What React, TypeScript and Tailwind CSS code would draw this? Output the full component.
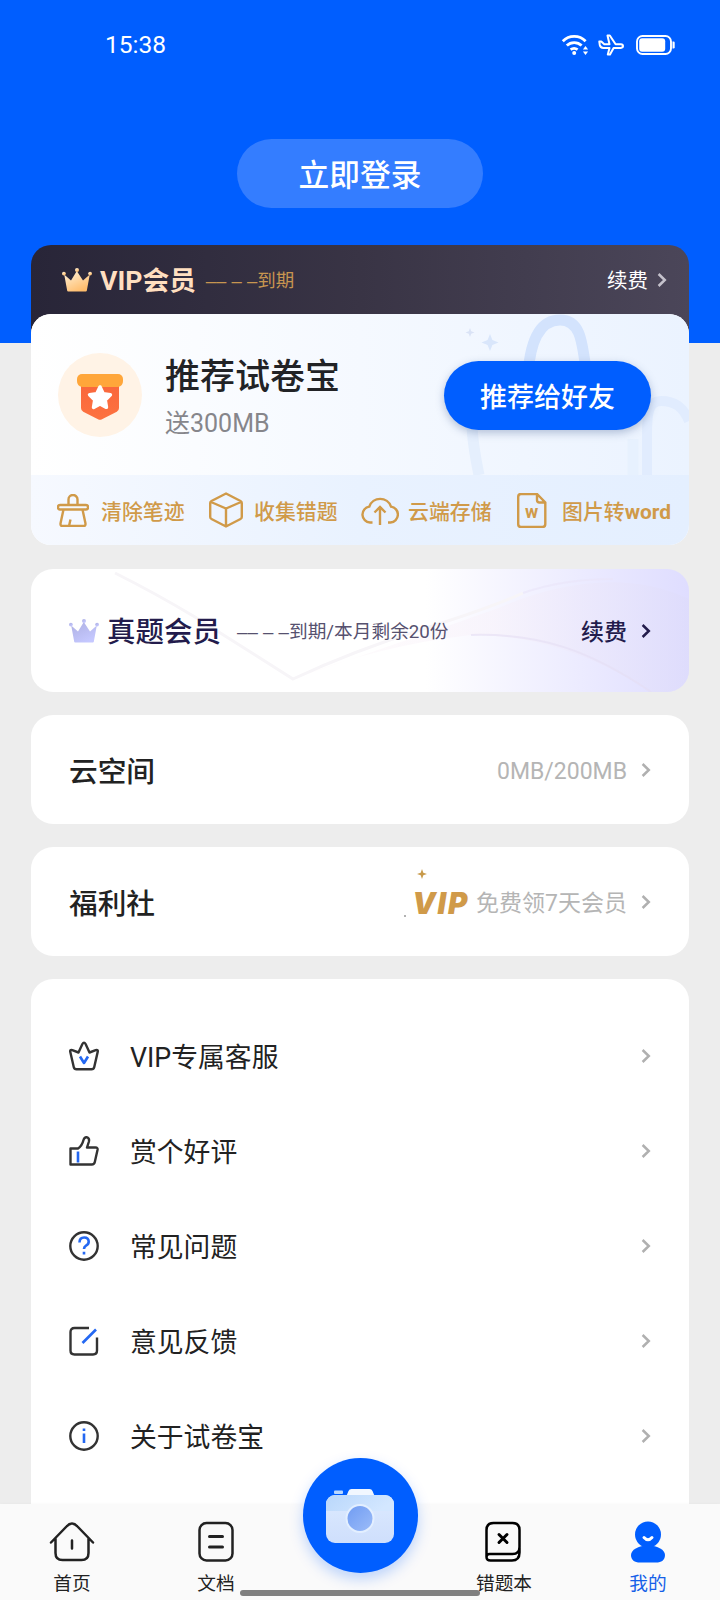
import type { ReactNode } from "react";
import { clsx } from "clsx";

function Chevron({ className }: { className?: string }) {
  return (
    <svg viewBox="0 0 10 16" className={clsx("w-[10px] h-4 shrink-0", className)} fill="none" stroke="currentColor" strokeWidth="2.5">
      <path d="M1.6 2 7.8 8l-6.2 6" />
    </svg>
  );
}

function Crown({ id, from, to }: { id: string; from: string; to: string }) {
  return (
    <svg viewBox="0 0 30 24" className="w-[30px] h-6 shrink-0">
      <defs>
        <linearGradient id={id} x1="0" y1="0" x2="0.6" y2="1">
          <stop offset="0" stopColor={from} />
          <stop offset="1" stopColor={to} />
        </linearGradient>
      </defs>
      <g fill={`url(#${id})`}>
        <path d="M2.2 6.5 9 12.5 14.8 3 21 12.5l6.8-6-3 16.2q-.1.8-1 .8H6.2q-.9 0-1-.8z" />
        <circle cx="1.9" cy="5.6" r="1.9" />
        <circle cx="15" cy="2" r="2" />
        <circle cx="28.1" cy="5.6" r="1.9" />
      </g>
    </svg>
  );
}

// placeholder shown while there is no expiry date
function EmptyDate() {
  return <span className="font-['Liberation_Sans',sans-serif]">–– – –</span>;
}

function StatusBar() {
  return (
    <div className="h-[90px] pl-[105px] pr-[45px] flex items-center justify-between text-white">
      <span className="text-[24.5px] leading-none">15:38</span>
      <div className="flex items-center">
        <svg viewBox="0 0 28 22" className="w-7 h-[22px]" fill="none" stroke="currentColor" strokeWidth="2.8">
          <path d="M1.8 7.2a16 16 0 0 1 22.800 0M5.800 11.600a10.500 10.500 0 0 1 14.800 0M9.600 15.600a6 6 0 0 1 7 0" />
          <circle cx="13.2" cy="19" r="2" fill="currentColor" stroke="none" />
          <path d="m24.500 12 2.600 3.600h-5.200zM24.500 21l2.600-3.600h-5.200z" fill="currentColor" stroke="none" />
        </svg>
        <svg viewBox="0 0 26 22" className="w-[26px] h-[22px] ml-[9px]" fill="none" stroke="currentColor" strokeWidth="2" strokeLinejoin="round">
          <path d="M1.300 7.500h2l3 2.700h5.200L9.500 1.500h2.300l5.800 8.700h5.200q2.200.2 2.200 1.900t-2.200 1.900h-7.200L12 20.500H9.800l1.700-6.500H5.500Q2.300 13.800 1.800 11z" />
        </svg>
        <svg viewBox="0 0 39 20" className="w-[39px] h-5 ml-[12px]" fill="none">
          <rect x="1" y="1" width="34" height="18" rx="5.5" stroke="currentColor" strokeWidth="1.9" />
          <rect x="3.2" y="3.2" width="26" height="13.6" rx="3" fill="currentColor" />
          <path d="M36.500 6.500h1q1.200 0 1.200 1.200v4.600q0 1.200-1.200 1.200h-1z" fill="currentColor" />
        </svg>
      </div>
    </div>
  );
}

function BagBackdrop() {
  return (
    <svg viewBox="0 0 230 161" className="absolute right-0 top-0 w-[230px] h-[161px]" fill="none">
      <path d="M20 161c-5-24-8-45-7-62" stroke="#e5effd" strokeWidth="11" />
      <path d="M69 60c2-28 10-54 32-54 20 0 22 20 26 50" stroke="#d3e3fd" strokeWidth="11" />
      <path d="M174 161v-36" stroke="#e7f1fe" strokeWidth="11" />
      <path d="M188 161v-40c0-24 2-34 14-34 14 0 22 6 28 20" stroke="#e1ecfe" strokeWidth="10" />
      <path d="M11 14l1.200 3.300 3.300 1.200-3.300 1.200L11 23l-1.200-3.300-3.300-1.200 3.300-1.200z" fill="#dae3f6" />
      <path d="M31 20l2.400 6.100 6.100 2.400-6.100 2.400L31 37l-2.400-6.100-6.100-2.400 6.100-2.400z" fill="#d9e6fb" />
    </svg>
  );
}

function BadgeIcon() {
  return (
    <div className="w-[84px] h-[84px] pt-[4px] rounded-full bg-[#fff3e6] flex items-center justify-center">
      <svg viewBox="0 0 46 46" className="w-[46px] h-[46px]">
        <defs>
          <linearGradient id="badge" x1="0" y1="0" x2="0" y2="1">
            <stop offset="0" stopColor="#f9663c" />
            <stop offset="1" stopColor="#fd7240" />
          </linearGradient>
        </defs>
        <path d="M4 8h38v26q0 2.500-2.200 3.700L25 45.300q-2 1-4 0L6.200 37.700Q4 36.500 4 34z" fill="url(#badge)" />
        <path d="M5 0h36a5 5 0 0 1 5 5v2q0 5-5 6H5q-5-1-5-6V5a5 5 0 0 1 5-5z" fill="#ffa63a" />
        <path
          d="M23 13l3.200 6.800 7.200 1-5.200 5.200 1.200 7.300-6.400-3.400-6.400 3.400 1.200-7.300-5.200-5.200 7.200-1z"
          fill="#fff"
          stroke="#fff"
          strokeWidth="3.6"
          strokeLinejoin="round"
        />
      </svg>
    </div>
  );
}

const features: { label: ReactNode; icon: ReactNode; className: string }[] = [
  {
    label: "清除笔迹",
    className: "w-[152px] gap-[12px]",
    icon: (
      <svg viewBox="0 0 32 33" className="w-8 h-[33px]">
        <path d="M11.500 11V5.500a4.500 4.500 0 0 1 9 0V11M3 11h26q2 0 2 2v.5q0 2-2 2H3q-2 0-2-2V13q0-2 2-2zM6.500 15.500 3.600 29q-.6 3 2 3h20.800q2.600 0 2-3l-2.900-13.500M13.500 25.500 12 32" />
      </svg>
    ),
  },
  {
    label: "收集错题",
    className: "w-[152px] gap-[11px]",
    icon: (
      <svg viewBox="0 0 34 36" className="w-[34px] h-9">
        <path d="M17 1.500 31.500 9q1.300.7 1.300 2v14q0 1.400-1.300 2L17 34.500 2.500 27q-1.300-.6-1.300-2V11q0-1.300 1.300-2zM2 10l15 6.500L32 10M17 16.500v18" />
      </svg>
    ),
  },
  {
    label: "云端存储",
    className: "w-[156px] gap-[9px]",
    icon: (
      <svg viewBox="0 0 38 32" className="w-[38px] h-8">
        <path d="M11.500 28.500H9A8 8 0 0 1 8.300 12.600 11.500 11.500 0 0 1 30 12.600 8 8 0 0 1 29.500 28.500h-2.500M19 31V13.500M13.500 18.500l5.500-5.500 5.500 5.500" />
      </svg>
    ),
  },
  {
    label: (
      <>
        图片转<b>word</b>
      </>
    ),
    className: "gap-[15px]",
    icon: (
      <svg viewBox="0 0 30 35" className="w-[30px] h-[35px]">
        <path d="M20 1H4Q1.200 1 1.200 4v27q0 3 2.800 3h21.500q2.800 0 2.800-3V9.500zM20 1v6q0 2.500 2.500 2.500h5.800" />
        <text x="14.6" y="24.5" textAnchor="middle" fontSize="18" fontWeight="700" fill="currentColor" stroke="none">
          w
        </text>
      </svg>
    ),
  },
];

function VipCard() {
  return (
    <section className="shrink-0 h-[300px]">
      <div className="h-[100px] pb-[31px] pl-[31px] pr-[22px] rounded-t-[20px] flex items-center bg-linear-to-r from-[#282538] via-[#393445] to-[#4b4659]">
        <Crown id="crown-gold" from="#fff3dc" to="#ffbd6c" />
        <span className="pt-[4px] ml-[8px] text-[26.7px] leading-none font-bold text-[#ffdfc0]">VIP会员</span>
        <span className="pt-[4px] ml-[10px] text-[18.5px] leading-none text-[#c79550]">
          <EmptyDate />
          到期
        </span>
        <span className="pt-[3px] ml-auto mr-[9px] text-[20.5px] leading-none text-white">续费</span>
        <Chevron className="text-[#c5c2cc]" />
      </div>
      <div className="h-[231px] -mt-[31px] rounded-[20px] overflow-hidden bg-white">
        <div className="relative h-[161px] pl-[27px] pr-[38px] flex items-center bg-linear-to-r from-white to-[#ebf3ff]">
          <BagBackdrop />
          <BadgeIcon />
          <div className="mt-[7px] ml-[23px] flex flex-col gap-[16px]">
            <h2 className="text-[35px] leading-none font-medium text-[#222326]">推荐试卷宝</h2>
            <p className="text-[25px] leading-none text-[#86868b]">送300MB</p>
          </div>
          <button className="relative mt-[2px] ml-auto pt-[5px] w-[207px] h-[69px] rounded-full bg-[#005eff] text-white text-[27px] leading-none font-medium shadow-[0_3px_8px_rgba(60,90,140,0.35)]">
            推荐给好友
          </button>
        </div>
        <div className="h-[70px] pl-[26px] flex items-center bg-linear-to-r from-[#f6f9ff] via-[#e9f2ff] to-[#e4efff] text-[#d09a49]">
          {features.map((f, i) => (
            <div key={i} className={clsx("flex items-center whitespace-nowrap", f.className)}>
              <span className="[&>svg]:fill-none [&>svg]:stroke-current [&>svg]:stroke-[2.4]">{f.icon}</span>
              <span className="pt-[5px] text-[20.9px] leading-none font-medium">{f.label}</span>
            </div>
          ))}
        </div>
      </div>
    </section>
  );
}

function ExamCard() {
  return (
    <section className="relative shrink-0 h-[123px] rounded-[22px] overflow-hidden bg-linear-to-r from-white from-60% to-[#dfddff] px-[38px] flex items-center text-[#231c4c]">
      <svg viewBox="0 0 658 123" className="absolute inset-0 w-full h-full" fill="none">
        <defs>
          <linearGradient id="wave" x1="0" y1="0" x2="1" y2="0">
            <stop offset="0" stopColor="#fffafa" stopOpacity="0.5" />
            <stop offset="0.5" stopColor="#f8f3fb" stopOpacity="0.7" />
            <stop offset="1" stopColor="#dedcfb" stopOpacity="0.7" />
          </linearGradient>
        </defs>
        <path d="M262 110C350 80 420 56 470 38 530 12 600 2 658 30v93h-38C560 84 500 66 440 66q-90 10-178 44z" fill="url(#wave)" />
        <path d="M84 4q40 20 80 44l98 62q60-28 130-50t100-36" stroke="#f7f5f8" strokeWidth="3" />
        <path d="M492 24q40-14 90-14" stroke="#e9e4f8" strokeOpacity="0.6" strokeWidth="2" />
        <path d="M440 66c70-2 120 16 180 57" stroke="#e5def3" strokeOpacity="0.6" strokeWidth="2" />
      </svg>
      <div className="relative flex-1 flex items-center">
        <Crown id="crown-purple" from="#aeb0e2" to="#c5c8ff" />
        <span className="pt-[5px] ml-[8px] text-[28.5px] leading-none font-medium">真题会员</span>
        <span className="pt-[4px] ml-[16px] text-[18.7px] leading-none text-[#56516f]">
          <EmptyDate />
          到期/本月剩余20份
        </span>
        <span className="pt-[4px] ml-auto mr-[14px] text-[23px] leading-none font-medium">续费</span>
        <Chevron />
      </div>
    </section>
  );
}

function LinkCard({ title, children }: { title: string; children: ReactNode }) {
  return (
    <section className="shrink-0 h-[109px] rounded-[22px] bg-white px-[38px] flex items-center">
      <span className="pt-[5px] text-[28.7px] leading-none font-medium text-[#222]">{title}</span>
      <div className="pt-[4px] ml-auto mr-[14px] flex items-center text-[23px] leading-none text-[#b5b5b5]">{children}</div>
      <Chevron className="text-[#b0b0b0]" />
    </section>
  );
}

const menu = [
  {
    label: "VIP专属客服",
    dark: "M9.500 11.500 13.400 3q1.600-2.800 3.200 0l3.900 8.500 6.200-2.300q2.600-.8 2 1.700l-3.500 15.300q-.5 2-2.600 2H7.400q-2.100 0-2.600-2L1.300 10.900q-.6-2.500 2-1.700z",
    blue: "m11 15.500 4 6.500 4-6.500",
  },
  {
    label: "赏个好评",
    dark: "M1.500 12.500H9q4-2.500 5.500-8.500Q15.500.8 18 1.300q2.800.8 1.800 4.700L18 11.500h8.500q2.500 0 2 2.500l-2.700 12q-.5 2.500-3 2.500H1.500z",
    blue: "M9 15.500v11",
  },
  {
    label: "常见问题",
    dark: "M15 1.300a13.700 13.700 0 1 1 0 27.400 13.700 13.700 0 0 1 0-27.400z",
    blue: "M10.500 11.500q0-5 4.700-5 4.500 0 4.500 4.300 0 2.500-2.700 3.900-2 1.200-2 3.300M15 20.700v2.800",
  },
  {
    label: "意见反馈",
    dark: "M20 2H5.500Q1.500 2 1.500 6v18.500q0 4 4 4h18.500q4 0 4-4V11.500",
    blue: "M13.500 17 27 3.500",
  },
  {
    label: "关于试卷宝",
    dark: "M15 1.300a13.700 13.700 0 1 1 0 27.400 13.700 13.700 0 0 1 0-27.400z",
    blue: "M15 12.500v9.500M15 7.500v2.500",
  },
];

function MenuCard() {
  return (
    <section className="shrink-0 h-[560px] pt-[29px] rounded-[22px] bg-white">
      {menu.map((m) => (
        <div key={m.label} className="h-[95px] px-[38px] flex items-center">
          <svg viewBox="0 0 30 30" className="w-[30px] h-[30px]" fill="none" strokeWidth="2.4" strokeLinejoin="round">
            <path d={m.dark} stroke="#333" />
            <path d={m.blue} stroke="#2468f2" strokeWidth="2.6" />
          </svg>
          <span className="pt-[5px] ml-[31px] text-[26.8px] leading-none text-[#222]">{m.label}</span>
          <Chevron className="ml-auto text-[#b0b0b0]" />
        </div>
      ))}
    </section>
  );
}

function NavItem({ label, active, children }: { label: string; active?: boolean; children: ReactNode }) {
  return (
    <div className={clsx("w-36 pt-[16px] flex flex-col items-center", active ? "text-[#1560e8]" : "text-[#222]")}>
      <svg viewBox="0 0 46 44" className="w-[46px] h-11" fill="none" stroke="currentColor" strokeWidth="2.5" strokeLinecap="round" strokeLinejoin="round">
        {children}
      </svg>
      <span className="mt-[11px] text-[18.7px] leading-none">{label}</span>
    </div>
  );
}

function Camera() {
  return (
    <svg viewBox="0 0 68 54" className="w-[68px] h-[54px]">
      <defs>
        <linearGradient id="cam-body" x1="0" y1="0" x2="0" y2="1">
          <stop offset="0" stopColor="#dceaff" />
          <stop offset="1" stopColor="#cfdffc" />
        </linearGradient>
        <linearGradient id="cam-band" x1="0" y1="0" x2="1" y2="0.3">
          <stop offset="0" stopColor="#b9d7fb" />
          <stop offset="1" stopColor="#d3e7ff" />
        </linearGradient>
        <linearGradient id="cam-lens" x1="0" y1="0" x2="1" y2="1">
          <stop offset="0" stopColor="#6f9bf2" />
          <stop offset="1" stopColor="#9dbdf9" />
        </linearGradient>
      </defs>
      <rect x="8" y="1.5" width="9" height="3.5" rx="1" fill="#b9d8ff" />
      <path d="M20 8 22.500 2q.8-2 3-2h18q2.200 0 3 2L49 8z" fill="#f1f7ff" />
      <rect y="6" width="68" height="48" rx="9" fill="url(#cam-body)" />
      <path d="M9 6h50a9 9 0 0 1 9 9v7H0v-7a9 9 0 0 1 9-9z" fill="url(#cam-band)" />
      <circle cx="34" cy="29.5" r="13.5" fill="url(#cam-lens)" stroke="#e3efff" strokeWidth="2" />
    </svg>
  );
}

function BottomNav() {
  return (
    <nav className="relative h-24 shrink-0 flex bg-[#fafafa] shadow-[0_-1px_3px_rgba(0,0,0,0.02)]">
      <NavItem label="首页">
        <path d="M2 22.500 17.500 6.500q5.500-6 11 0L44 22.500M6.500 18.500V33q0 7 7 7h19q7 0 7-7V18.500M23 20.500v8" />
      </NavItem>
      <NavItem label="文档">
        <rect x="6.5" y="3" width="33" height="37.5" rx="7" />
        <path d="M16.500 16.500h13M16.500 27h13" strokeWidth="3" />
      </NavItem>
      <div className="w-36 flex justify-center">
        <button className="relative -mt-[46px] w-[115px] h-[115px] rounded-full bg-[#005eff] flex items-center justify-center shadow-[0_6px_14px_rgba(0,94,255,0.25)]">
          <Camera />
        </button>
      </div>
      <NavItem label="错题本">
        <g stroke="#000">
          <path d="M5.500 37V10q0-7 7-7h19q7 0 7 7v17q0 7-7 7H8.500Q5.500 34 5.500 37q0 3.500 4 3.500H31q7.500 0 7.500-8v-5" />
          <path d="m18 14.500 8 8M26 14.500l-8 8" strokeWidth="3" />
        </g>
      </NavItem>
      <NavItem label="我的" active>
        <g stroke="none">
          <circle cx="23" cy="14.5" r="13" fill="#005eff" />
          <path d="M23 25.500c10 0 17 4.500 17 9.500S36.500 42.500 31 42.500H15c-5.500 0-9-2.500-9-7.500S13 25.500 23 25.500z" fill="#005eff" />
        </g>
        <path d="M19 17.500q4 4.500 8 0" stroke="#fff" strokeWidth="3" />
      </NavItem>
      <div className="absolute left-[240px] top-[86px] w-60 h-[6px] rounded-full bg-[#808080]" />
    </nav>
  );
}

export default function App() {
  return (
    <div
      lang="zh-CN"
      className="w-[720px] h-[1600px] overflow-hidden flex flex-col bg-[#ededed] font-[Roboto,'Noto_Sans_CJK_SC',sans-serif]"
    >
      <header className="h-[343px] shrink-0 bg-[#005eff]">
        <StatusBar />
        <div className="pt-[49px] flex justify-center">
          <button className="pt-[5px] w-[246px] h-[69px] rounded-full bg-[#347dff] text-white text-[30.7px] leading-none font-medium">立即登录</button>
        </div>
      </header>
      <main className="flex-1 min-h-0 -mt-[98px] px-[31px] flex flex-col overflow-hidden">
        <VipCard />
        <div className="mt-[24px] flex flex-col gap-[23px]">
          <ExamCard />
          <LinkCard title="云空间">0MB/200MB</LinkCard>
          <LinkCard title="福利社">
            <span className="relative mr-[7px] font-[Inter,Roboto,sans-serif] text-[29.5px] tracking-[1.8px] font-black italic text-[#d09a49]">
              VIP
              <svg viewBox="0 0 30 50" className="absolute -left-[9px] -top-[20px] w-[30px] h-[50px]">
                <path d="M19 0l1.300 3.700L24 5l-3.700 1.300L19 10l-1.300-3.700L14 5l3.700-1.300z" fill="#c89a4a" />
                <circle cx="2" cy="47" r="1" fill="#999" />
              </svg>
            </span>
            免费领7天会员
          </LinkCard>
          <MenuCard />
        </div>
      </main>
      <BottomNav />
    </div>
  );
}
